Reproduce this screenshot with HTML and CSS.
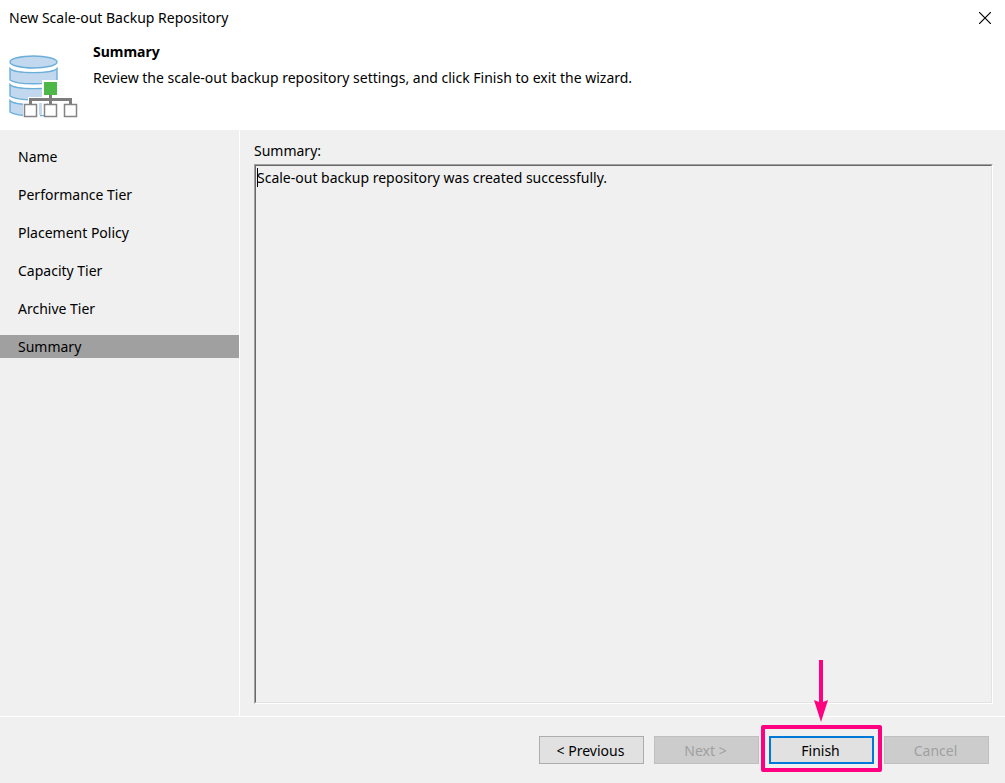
FILE: index.html
```html
<!DOCTYPE html>
<html lang="en">
<head>
<meta charset="utf-8">
<meta name="viewport" content="width=device-width, initial-scale=1">
<title>New Scale-out Backup Repository</title>
<link rel="stylesheet" href="styles.css">
</head>
<body>
<div class="wizard">
  <header class="header">
    <div class="titlebar">
      <span class="window-title">New Scale-out Backup Repository</span>
      <button class="close" type="button" aria-label="Close">
        <svg width="12" height="12" viewBox="0 0 12 12" aria-hidden="true"><path d="M0 0L12 12M12 0L0 12" stroke="#000" stroke-width="1.2"/></svg>
      </button>
    </div>
    <div class="intro">
      <svg class="logo" width="70" height="64" viewBox="0 0 70 64" aria-hidden="true">
        <g fill="#c1d8ef" stroke="#6bafd9" stroke-width="1.4">
          <ellipse cx="24.5" cy="7" rx="23.5" ry="6"/>
          <path d="M1 13.500C6 19 43 19 48 13.500V25C41 30 8 30 1 25Z"/>
          <path d="M1 29.500C6 35 43 35 48 29.500V41C41 46 8 46 1 41Z"/>
          <path d="M1 45.500C6 51 43 51 48 45.500V57C41 62 8 62 1 57Z"/>
        </g>
        <path fill="#fff" d="M33 25H57V41H72V64H43V60H41V64H37V60H31V64H14V46H19V42H33Z"/>
        <path fill="#c1d8ef" d="M30 48H33V60H30ZM38 48H39V49H38Z"/>
        <path fill="none" stroke="#7d7d7d" stroke-width="3" d="M41.500 40V49M21.500 49V44.500H61.500V49"/>
        <path fill="#4db848" d="M35 27H48V40H35Z"/>
        <path fill="#fff" stroke="#858585" stroke-width="1.500" d="M15.500 49.500H27.500V61.500H15.500ZM35.500 49.500H47.500V61.500H35.500ZM55.500 49.500H67.500V61.500H55.500Z"/>
      </svg>
      <div class="intro-text">
        <h1 class="step-title">Summary</h1>
        <p class="step-description">Review the scale-out backup repository settings, and click Finish to exit the wizard.</p>
      </div>
    </div>
  </header>
  <div class="body">
    <nav class="steps" aria-label="Wizard steps">
      <a class="step" href="#name">Name</a>
      <a class="step" href="#performance">Performance Tier</a>
      <a class="step" href="#placement">Placement Policy</a>
      <a class="step" href="#capacity">Capacity Tier</a>
      <a class="step" href="#archive">Archive Tier</a>
      <a class="step current" href="#summary" aria-current="step">Summary</a>
    </nav>
    <main class="content">
      <label class="label" for="summary">Summary:</label>
      <div class="field">
        <textarea class="summary" id="summary" readonly>Scale-out backup repository was created successfully.</textarea>
        <span class="caret"></span>
      </div>
    </main>
  </div>
  <footer class="footer">
    <button class="button" type="button">&lt; Previous</button>
    <button class="button" type="button" disabled>Next &gt;</button>
    <div class="callout">
      <button class="button primary" type="button">Finish</button>
      <svg class="arrow" width="14" height="62" viewBox="0 0 14 62" aria-hidden="true"><path fill="#ff0080" d="M5 0H9V42L14 40L7 62L0 40L5 42Z"/></svg>
    </div>
    <button class="button" type="button" disabled>Cancel</button>
  </footer>
</div>
</body>
</html>
```

FILE: styles.css
```css
* {
  box-sizing: border-box;
}

body {
  margin: 0;
  font: 14px/20px "Noto Sans", "Open Sans", sans-serif;
  color: #000;
  background: #f0f0f0;
}

.wizard {
  display: flex;
  flex-direction: column;
  min-height: 100vh;
}

.header {
  padding-bottom: 11px;
  background: #fff;
}

.titlebar {
  display: flex;
  align-items: center;
  justify-content: space-between;
  height: 35px;
  padding: 0 10px 0 9px;
}

.close {
  display: flex;
  align-items: center;
  justify-content: center;
  width: 20px;
  height: 20px;
  padding: 0;
  border: 0;
  background: none;
}

.intro {
  display: flex;
  gap: 14px;
  padding: 7px 9px 0;
}

.logo {
  flex: none;
  margin-top: 13px;
}

.step-title {
  margin: 0;
  font-size: 14px;
  line-height: 20px;
}

.step-description {
  margin: 6px 0 0;
}

.body {
  display: flex;
  flex: 1;
}

.steps {
  display: flex;
  flex-direction: column;
  gap: 15px;
  flex: 0 0 240px;
  padding-top: 15px;
  border-right: 1px solid #fff;
}

.step {
  padding-left: 18px;
  line-height: 23px;
  color: #000;
  text-decoration: none;
}

.current {
  background: #a0a0a0;
}

.content {
  display: flex;
  flex: 1;
  flex-direction: column;
  gap: 3px;
  padding: 11px 12px 12px 14px;
}

.field {
  position: relative;
  display: flex;
  flex: 1;
  border: 1px solid;
  border-color: #a0a0a0 #fff #fff #a0a0a0;
}

.summary {
  flex: 1;
  padding: 2px 1px;
  border: 1px solid;
  border-color: #696969 #e3e3e3 #e3e3e3 #696969;
  border-radius: 0;
  outline: 0;
  font: inherit;
  color: #000;
  background: #f0f0f0;
  resize: none;
}

.caret {
  position: absolute;
  top: 3px;
  left: 2px;
  width: 1px;
  height: 19px;
  background: #000;
}

.footer {
  display: flex;
  justify-content: flex-end;
  gap: 10px;
  padding: 19px 16px;
  border-top: 1px solid #fff;
}

.button {
  width: 105px;
  height: 28px;
  padding: 2px 2px 0 0;
  border: 1px solid #adadad;
  border-radius: 0;
  font: inherit;
  color: #000;
  background: #e1e1e1;
}

.button:disabled {
  border-color: #bfbfbf;
  color: #a0a0a0;
  background: #ccc;
}

.primary {
  border: 2px solid #0078d7;
}

.callout {
  position: relative;
}

.callout::after {
  content: "";
  position: absolute;
  inset: -11px -8px -8px;
  border: 4px solid #ff0080;
  border-radius: 2px;
  pointer-events: none;
}

.arrow {
  position: absolute;
  top: -76px;
  left: 45px;
}
```
